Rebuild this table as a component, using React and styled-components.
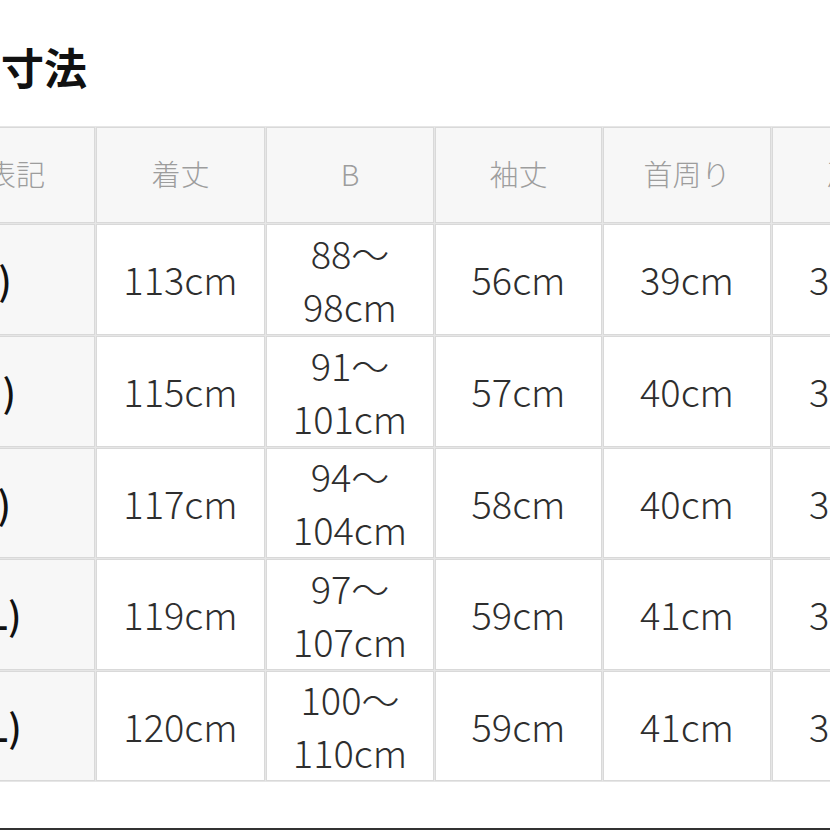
import React from "react";
import styled, { createGlobalStyle } from "styled-components";

const Global = createGlobalStyle`
  html, body { margin: 0; padding: 0; background: #fff; }
  body { font-family: "Noto Sans CJK JP", "Noto Sans", sans-serif; overflow: hidden; }
`;

const Page = styled.div`
  width: 830px;
  height: 830px;
  overflow: hidden;
  display: flex;
  flex-direction: column;
  align-items: flex-start;
`;

const Title = styled.h2`
  margin: 40px 0 0 1px;
  font-size: 43px;
  line-height: 53px;
  font-weight: 700;
  color: #111;
`;

const Table = styled.table`
  margin-top: 33px;
  margin-left: -150px;
  width: 1084px;
  min-width: 1084px;
  border-collapse: separate;
  border-spacing: 1px;
  background: #e6e6e6;
  table-layout: fixed;
  flex-shrink: 0;
`;

const Col = styled.col`
  width: ${(p) => p.$w}px;
`;

const Th = styled.th`
  height: 89px;
  border: 1px solid #d9d9d9;
  background: #f7f7f7;
  color: #9d9d9d;
  font-size: 29px;
  font-weight: 300;
  text-align: center;
  vertical-align: middle;
  padding: 0 0 5px;
  white-space: nowrap;
`;

const Td = styled.td`
  height: ${(p) => p.$h}px;
  border: 1px solid #d9d9d9;
  background: ${(p) => (p.$label ? "#f7f7f7" : "#fff")};
  color: ${(p) => (p.$label ? "#111" : "#2e2e2e")};
  font-size: 38px;
  line-height: 53px;
  font-weight: ${(p) => (p.$label ? 500 : 300)};
  text-align: center;
  vertical-align: middle;
  padding: ${(p) => (p.$label ? "0 0 2px 6px" : "0 0 2px")};
  white-space: nowrap;
`;

const Rule = styled.div`
  margin-top: auto;
  align-self: stretch;
  height: 2px;
  background: #333;
  flex-shrink: 0;
`;

const widths = [244, 169, 168, 167, 168, 168];
const heights = [109, 109, 108, 109, 108];
const headers = ["サイズ表記", "着丈", "B", "袖丈", "首周り", "肩幅"];
const rows = [
  ["1(S)", "113cm", ["88～", "98cm"], "56cm", "39cm", "36cm"],
  ["2(M)", "115cm", ["91～", "101cm"], "57cm", "40cm", "37cm"],
  ["3(L)", "117cm", ["94～", "104cm"], "58cm", "40cm", "38cm"],
  ["4(LL)", "119cm", ["97～", "107cm"], "59cm", "41cm", "39cm"],
  ["5(3L)", "120cm", ["100～", "110cm"], "59cm", "41cm", "39cm"],
];

export default function App() {
  return (
    <Page>
      <Global />
      <Title>寸法</Title>
      <Table>
        <colgroup>
          {widths.map((w, i) => (
            <Col key={i} $w={w} />
          ))}
        </colgroup>
        <thead>
          <tr>
            {headers.map((h) => (
              <Th key={h}>{h}</Th>
            ))}
          </tr>
        </thead>
        <tbody>
          {rows.map((r, ri) => (
            <tr key={r[0]}>
              {r.map((c, i) => (
                <Td key={i} $label={i === 0} $h={heights[ri] - 2}>
                  {Array.isArray(c) ? (
                    <>
                      {c[0]}
                      <br />
                      {c[1]}
                    </>
                  ) : (
                    c
                  )}
                </Td>
              ))}
            </tr>
          ))}
        </tbody>
      </Table>
      <Rule />
    </Page>
  );
}
